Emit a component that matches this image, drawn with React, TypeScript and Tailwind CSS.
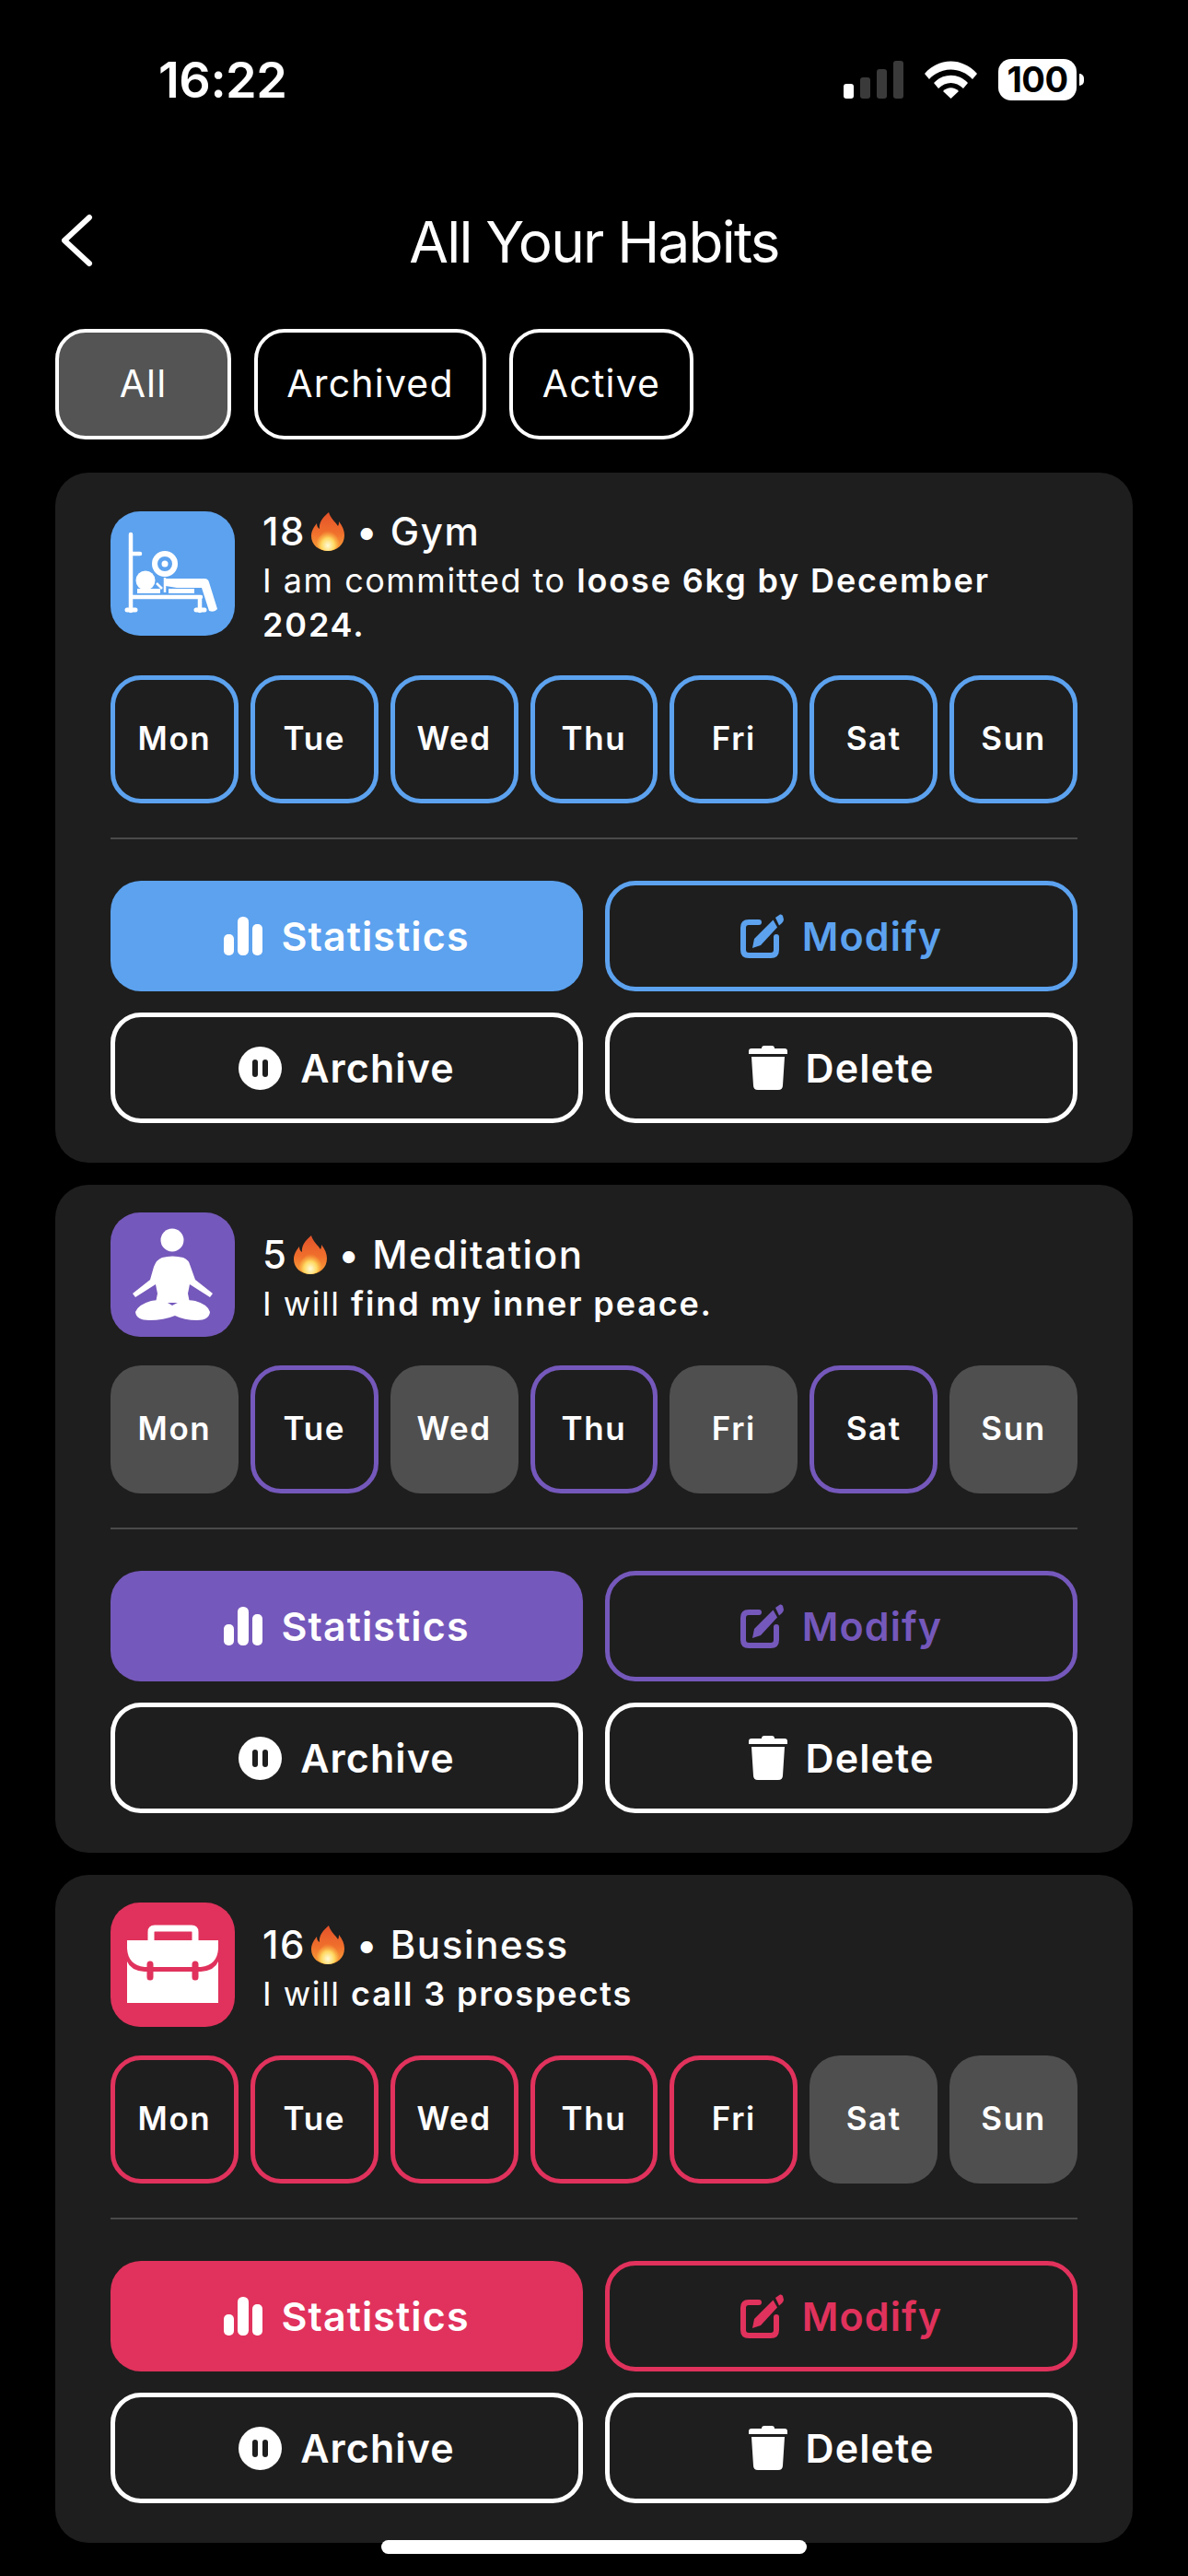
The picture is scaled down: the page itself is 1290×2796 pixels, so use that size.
import { type ReactNode } from 'react'

type Theme = {
  bg: string
  text: string
  border: string
}

type Habit = {
  streak: number
  name: string
  lead: string
  goal: string
  days: boolean[]
  theme: Theme
  icon: ReactNode
}

const DAY_NAMES = ['Mon', 'Tue', 'Wed', 'Thu', 'Fri', 'Sat', 'Sun']

function GymIcon() {
  return (
    <svg viewBox="0 0 135 135" className="h-full w-full" fill="none">
      <path d="M22 25V108M22 46H32M22 93H98M97 93V108" stroke="#fff" strokeWidth="4.5" strokeLinecap="round" />
      <path d="M18 107h9M93 107h9" stroke="#fff" strokeWidth="5" strokeLinecap="round" />
      <circle cx="59" cy="57" r="11" stroke="#fff" strokeWidth="6" />
      <circle cx="59" cy="57" r="3.5" fill="#fff" />
      <circle cx="38" cy="75" r="10.5" fill="#fff" />
      <path d="M29 84h25v5H29zM63 84h28v5H63z" fill="#fff" />
      <path d="M60 73H102Q106 73 107 77L116 106Q113 110 107 108L99 83H72L60 81Z" fill="#fff" />
      <path d="M59 72V88M50 78l6 6" stroke="#fff" strokeWidth="2.5" />
    </svg>
  )
}

function MeditationIcon() {
  return (
    <svg viewBox="0 0 135 135" className="h-full w-full" fill="#fff">
      <circle cx="67" cy="30" r="12.5" />
      <path d="M56 49Q67 46 79 49Q85 51 87 59L92 73L111 88L108 92L86 78L84 88L86 98L49 98L51 88L49 78L27 92L24 88L43 73L47 59Q50 51 56 49Z" />
      <path d="M44 96Q56 93 67 101Q80 93 92 96Q106 100 108 108Q107 117 94 117Q80 117 70 112Q58 117 42 117Q28 117 27 108Q30 100 44 96Z" />
    </svg>
  )
}

function BriefcaseIcon() {
  return (
    <svg viewBox="0 0 135 135" className="h-full w-full" fill="none">
      <path d="M44 41V32Q44 28 48 28H88Q92 28 92 32V41" stroke="#fff" strokeWidth="7" />
      <path d="M18 41H117V50Q116 68 98 70H37Q19 68 18 50Z" fill="#fff" />
      <path d="M18 64Q22 74 37 75H98Q113 74 117 64V109H18Z" fill="#fff" />
      <path d="M43 67V81M92 67V81" stroke="#e0325c" strokeWidth="7" strokeLinecap="round" />
    </svg>
  )
}

function Flame() {
  return (
    <svg viewBox="0 0 36 42" className="ml-[6px] h-[42px] w-[36px] shrink-0">
      <defs>
        <linearGradient id="flame-fill" x1="0" y1="0" x2="0" y2="1">
          <stop offset="0" stopColor="#e4512a" />
          <stop offset="0.55" stopColor="#f0702c" />
          <stop offset="1" stopColor="#f9a33a" />
        </linearGradient>
        <radialGradient id="flame-core" cx="0.5" cy="0.78" r="0.6">
          <stop offset="0" stopColor="#fffbd8" />
          <stop offset="0.5" stopColor="#fed75f" />
          <stop offset="1" stopColor="#f9a33a" stopOpacity="0" />
        </radialGradient>
      </defs>
      <path
        d="M19 0C21 7 26 10 29 15C30 13 30 12 30 10C34 15 36 20 36 25C36 35 28 42 18 42C8 42 0 35 0 26C0 20 3 16 6 12C6 15 7 17 9 18C8 11 13 5 19 0Z"
        fill="url(#flame-fill)"
      />
      <path d="M18 15C20 21 30 25 30 33C30 38 24 42 18 42C12 42 6 38 6 33C6 26 15 23 18 15Z" fill="url(#flame-core)" />
    </svg>
  )
}

function BarsIcon() {
  return (
    <svg viewBox="0 0 42 42" className="h-[42px] w-[42px] shrink-0" fill="currentColor">
      <rect x="0" y="19" width="11" height="23" rx="5" />
      <rect x="15" y="0" width="12" height="42" rx="5.5" />
      <rect x="31" y="8" width="11" height="34" rx="5" />
    </svg>
  )
}

function EditIcon() {
  return (
    <svg viewBox="0 0 47 48" className="h-[48px] w-[47px] shrink-0" fill="none">
      <path
        d="M20 9H9Q3 9 3 15V39Q3 45 9 45H33Q39 45 39 39V25"
        stroke="currentColor"
        strokeWidth="6"
        strokeLinecap="round"
      />
      <path d="M38 4L43 0.5Q45 0 46 2L47 6Q47 8 45 10L42 12.5Z" fill="currentColor" />
      <path d="M35.5 6.5L40 14.5L22 34L13 37L15 27Z" fill="currentColor" />
    </svg>
  )
}

function PauseIcon() {
  return (
    <svg viewBox="0 0 47 47" className="h-[47px] w-[47px] shrink-0">
      <circle cx="23.5" cy="23.5" r="23.5" fill="#fff" />
      <rect x="15" y="14" width="6" height="19" rx="3" fill="#1e1e1e" />
      <rect x="26" y="14" width="6" height="19" rx="3" fill="#1e1e1e" />
    </svg>
  )
}

function TrashIcon() {
  return (
    <svg viewBox="0 0 42 48" className="h-[48px] w-[42px] shrink-0" fill="#fff">
      <path d="M14 3Q14 0 17 0H25Q28 0 28 3H39Q42 3 42 6V9H0V6Q0 3 3 3Z" />
      <path d="M3 12H39L37 43Q37 48 32 48H10Q5 48 5 43Z" />
    </svg>
  )
}

function SignalBars() {
  return (
    <div className="flex items-end gap-[7px]">
      <span className="h-[16px] w-[11px] rounded-[3px] bg-white" />
      <span className="h-[23px] w-[11px] rounded-[3px] bg-[#3a3a3a]" />
      <span className="h-[32px] w-[11px] rounded-[3px] bg-[#3a3a3a]" />
      <span className="h-[41px] w-[11px] rounded-[3px] bg-[#3a3a3a]" />
    </div>
  )
}

function WifiIcon() {
  return (
    <svg viewBox="0 0 57 41" className="h-[41px] w-[57px]" fill="#fff">
      <path d="M0 14C16 -4 41 -4 57 14L52 20C39 6 18 6 5 20Z" />
      <path d="M10 24C20 13 37 13 47 24L42 30C34 22 23 22 15 30Z" />
      <path d="M20 33C25 28 32 28 37 33L28.5 41Z" />
    </svg>
  )
}

function Battery() {
  return (
    <div className="-mb-[2px] flex items-center gap-[3px]">
      <div className="flex h-[45px] w-[85px] items-center justify-center rounded-[14px] bg-white text-[38px] font-bold tracking-[-0.5px] text-black">
        100
      </div>
      <span className="h-[13px] w-[5px] rounded-r-full bg-white" />
    </div>
  )
}

function StatusBar() {
  return (
    <div className="flex h-[107px] items-end justify-between pl-[172px] pr-[113px]">
      <span className="text-[54px] leading-[40px] font-semibold tracking-[-0.5px] text-white">16:22</span>
      <div className="flex items-end gap-[23px]">
        <SignalBars />
        <WifiIcon />
        <Battery />
      </div>
    </div>
  )
}

function Header() {
  return (
    <div className="relative mt-[113px] flex h-[86px] items-center justify-center">
      <svg viewBox="0 0 36 58" className="absolute left-[65px] top-[12px] h-[58px] w-[36px]" fill="none">
        <path d="M32 4L5 29L32 54" stroke="#fff" strokeWidth="6" strokeLinecap="round" strokeLinejoin="round" />
      </svg>
      <h1 className="text-[62px] leading-none font-normal tracking-[-1.8px] text-white">All Your Habits</h1>
    </div>
  )
}

function FilterTabs() {
  return (
    <div className="mt-[51px] flex gap-[25px] pl-[60px]">
      <button
        type="button"
        className="h-[120px] w-[191px] rounded-[33px] border-[4px] border-white bg-[#545454] text-[41px] tracking-[1.2px] text-white"
      >
        All
      </button>
      <button
        type="button"
        className="h-[120px] w-[252px] rounded-[33px] border-[4px] border-white bg-black text-[41px] tracking-[1.2px] text-white"
      >
        Archived
      </button>
      <button
        type="button"
        className="h-[120px] w-[200px] rounded-[33px] border-[4px] border-white bg-black text-[41px] tracking-[1.2px] text-white"
      >
        Active
      </button>
    </div>
  )
}

function ActionButton({ className, icon, label }: { className: string; icon: ReactNode; label: string }) {
  return (
    <button
      type="button"
      className={`flex h-[120px] items-center justify-center gap-[20px] rounded-[33px] text-[43px] font-semibold tracking-[1.1px] ${className}`}
    >
      {icon}
      {label}
    </button>
  )
}

function HabitCard({ habit }: { habit: Habit }) {
  const { theme } = habit
  return (
    <section className="rounded-[36px] bg-[#1e1e1e] px-[60px] pt-[30px] pb-[43px] text-white">
      <div className="flex items-center gap-[30px]">
        <div className={`h-[135px] w-[135px] shrink-0 rounded-[32px] ${theme.bg}`}>{habit.icon}</div>
        <div className="min-w-0">
          <div className="flex h-[63px] items-center pt-[4px] text-[42px] leading-[57px] font-medium tracking-[1.6px]">
            <span>{habit.streak}</span>
            <Flame />
            <span className="whitespace-pre"> • {habit.name}</span>
          </div>
          <p className="text-[36px] leading-[48px] tracking-[1.5px]">
            {habit.lead} <b className="font-semibold tracking-[1.85px]">{habit.goal}</b>
          </p>
        </div>
      </div>

      <div className="mt-[31px] grid grid-cols-7 gap-[13px]">
        {habit.days.map((on, i) => (
          <div
            key={DAY_NAMES[i]}
            className={`flex h-[139px] items-center justify-center rounded-[33px] pb-[2px] text-[35px] font-semibold tracking-[1.6px] ${
              on ? `border-[5px] ${theme.border}` : 'bg-[#4f4f4f]'
            }`}
          >
            {DAY_NAMES[i]}
          </div>
        ))}
      </div>

      <div className="mt-[37px] h-[2px] bg-[#4a4a4a]" />

      <div className="mt-[45px] grid grid-cols-2 gap-x-[24px] gap-y-[23px]">
        <ActionButton className={`${theme.bg} text-white`} icon={<BarsIcon />} label="Statistics" />
        <ActionButton className={`border-[5px] ${theme.border} ${theme.text}`} icon={<EditIcon />} label="Modify" />
        <ActionButton className="border-[5px] border-white text-white" icon={<PauseIcon />} label="Archive" />
        <ActionButton className="border-[5px] border-white text-white" icon={<TrashIcon />} label="Delete" />
      </div>
    </section>
  )
}

const habits: Habit[] = [
  {
    streak: 18,
    name: 'Gym',
    lead: 'I am committed to',
    goal: 'loose 6kg by December 2024.',
    days: [true, true, true, true, true, true, true],
    theme: { bg: 'bg-[#5ca2ef]', text: 'text-[#5ca2ef]', border: 'border-[#5ca2ef]' },
    icon: <GymIcon />,
  },
  {
    streak: 5,
    name: 'Meditation',
    lead: 'I will',
    goal: 'find my inner peace.',
    days: [false, true, false, true, false, true, false],
    theme: { bg: 'bg-[#7558bb]', text: 'text-[#7558bb]', border: 'border-[#7558bb]' },
    icon: <MeditationIcon />,
  },
  {
    streak: 16,
    name: 'Business',
    lead: 'I will',
    goal: 'call 3 prospects',
    days: [true, true, true, true, true, false, false],
    theme: { bg: 'bg-[#e0325c]', text: 'text-[#e0325c]', border: 'border-[#e0325c]' },
    icon: <BriefcaseIcon />,
  },
]

export default function App() {
  return (
    <div className="relative h-[2796px] w-[1290px] overflow-hidden bg-black font-['Inter',sans-serif]">
      <StatusBar />
      <Header />
      <FilterTabs />
      <div className="mt-[36px] flex flex-col gap-[24px] px-[60px]">
        {habits.map((habit) => (
          <HabitCard key={habit.name} habit={habit} />
        ))}
      </div>
      {/* Home indicator */}
      <div className="absolute bottom-[24px] left-[414px] h-[15px] w-[462px] rounded-full bg-white" />
    </div>
  )
}
